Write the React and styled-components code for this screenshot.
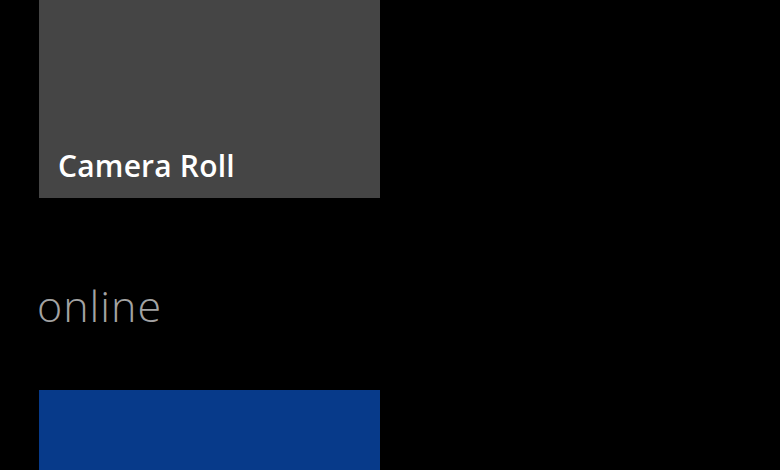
import React from 'react';
import styled, {createGlobalStyle} from 'styled-components';

const Global = createGlobalStyle`
html, body {
    margin: 0;
    padding: 0;
    background: #000;
    overflow: hidden;
}
`;

const Page = styled.div`
width: 780px;
height: 470px;
background: #000;
display: flex;
flex-direction: column;
padding-left: 39px;
box-sizing: border-box;
font-family: "Open Sans", "Segoe UI", sans-serif;
overflow: hidden;
`;

const Tile = styled.div`
width: 341px;
height: ${props => props.h}px;
margin-top: ${props => props.top || 0}px;
flex-shrink: 0;
background: ${props => props.color};
display: flex;
align-items: flex-end;
box-sizing: border-box;
padding: 0 0 12px 19px;
`;

const TileLabel = styled.div`
color: #fff;
font-size: 30px;
font-weight: 600;
line-height: 40px;
letter-spacing: 0.2px;
`;

const GroupTitle = styled.div`
color: #a3a3a3;
font-size: 43px;
font-weight: 300;
line-height: 50px;
margin: 83px 0 0 -2px;
height: 50px;
letter-spacing: 1px;
`;

const App = () => {
    return <>
        <Global />
        <Page>
            <Tile h={198} color="#454545">
                <TileLabel>Camera Roll</TileLabel>
            </Tile>
            <GroupTitle>online</GroupTitle>
            <Tile h={120} top={59} color="#073a8a" />
        </Page>
    </>
}

export default App;
